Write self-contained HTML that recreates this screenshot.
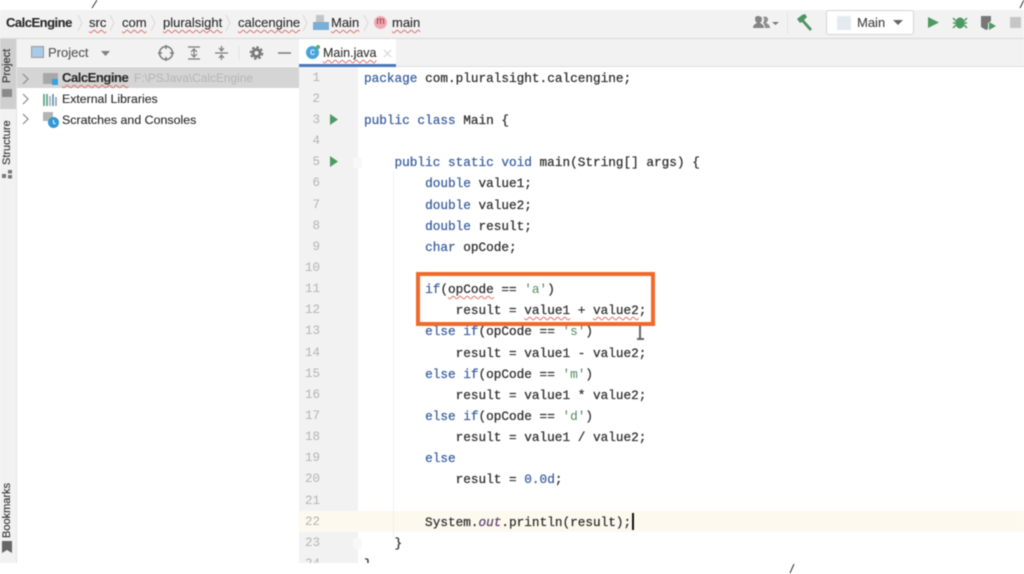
<!DOCTYPE html>
<html><head><meta charset="utf-8"><style>
html,body{margin:0;padding:0;background:#fff}
#r{position:relative;width:1024px;height:574px;overflow:hidden;background:#fff;font-family:"Liberation Sans",sans-serif;color:#2b2b2b;filter:blur(.45px)}
#r div,#r svg{position:absolute}
.t{white-space:pre;line-height:18px;font-size:13px;-webkit-text-stroke:.12px currentColor}
.u{text-decoration:underline wavy #e0706a 1px;text-underline-offset:2px;text-decoration-skip-ink:none}
.c{left:0;white-space:pre;font:12.72px/21px "Liberation Mono",monospace;color:#2e2e2e;-webkit-text-stroke:.25px #2e2e2e}
.k{color:#3a5f9e;-webkit-text-stroke:.25px #3a5f9e}.s{color:#4d8a5a;-webkit-text-stroke:0}.i{color:#7a4a93;font-style:italic}
.n{left:298px;width:22px;text-align:right;font:12.5px/21px "Liberation Mono",monospace;color:#b4b4b4}
.v{transform-origin:0 0;transform:rotate(-90deg);white-space:pre;font-size:11px;line-height:14px;color:#333;-webkit-text-stroke:.15px #333}
</style></head><body><div id="r">
<div style="left:0;top:10px;width:1024px;height:28px;background:#f2f2f2;border-bottom:1px solid #d8d8d8"></div>
<div style="left:0;top:39px;width:1024px;height:27px;background:#f2f2f2"></div>
<div style="left:0;top:39px;width:16px;height:524px;background:#f2f2f2;border-right:1px solid #e2e2e2"></div>
<div style="left:0;top:39px;width:16px;height:70px;background:#cfcfcf"></div>
<div style="left:17px;top:66px;width:282px;height:497px;background:#fff"></div>
<div style="left:17px;top:67px;width:282px;height:21px;background:#d5d5d5"></div>
<div style="left:299px;top:66px;width:725px;height:1px;background:#dcdcdc"></div>
<div style="left:299px;top:67px;width:59px;height:496px;background:#f2f2f2"></div>
<div style="left:299px;top:39px;width:97px;height:25px;background:#fff"></div>
<div style="left:299px;top:64px;width:97px;height:3px;background:#4a78b8"></div>
<div style="left:299px;top:511px;width:725px;height:21px;background:#fdf9ef"></div>
<div style="left:393px;top:172px;width:1px;height:365px;background:#efefef"></div>

<!-- breadcrumb -->
<div class="t" style="left:6px;top:14px;font-weight:bold;letter-spacing:-.5px">CalcEngine</div>
<div class="t u" style="left:89px;top:14px">src</div>
<div class="t u" style="left:122px;top:14px">com</div>
<div class="t u" style="left:163px;top:14px">pluralsight</div>
<div class="t u" style="left:238px;top:14px">calcengine</div>
<div class="t u" style="left:331px;top:14px">Main</div>
<div class="t u" style="left:392px;top:14px">main</div>
<svg style="left:0;top:12px" width="400" height="24" fill="none" stroke="#d8d8d8" stroke-width="1"><path d="M78 3l4 8-4 8M110 3l4 8-4 8M151 3l4 8-4 8M226 3l4 8-4 8M303 3l4 8-4 8M364 3l4 8-4 8"/></svg>
<div style="left:313px;top:22px;width:16px;height:8px;background:#79aed6"></div>
<div style="left:316px;top:15px;width:8px;height:7px;background:#c4c4c4"></div>
<div style="left:374px;top:16px;width:13px;height:13px;border-radius:50%;background:#eeaab0;color:#a03040;font-size:10px;line-height:11px;text-align:center">m</div>

<!-- right toolbar -->
<svg style="left:750px;top:10px" width="274" height="30">
<path d="M3 18c0-3 2-4 4-5-1-1-2-2-2-4s1-3 3-3 4 1 4 3-1 3-2 4c2 1 4 2 4 5z" fill="#858585"/><path d="M13 7c2-1 5 0 5 2s-1 3-2 4c2 1 4 2 4 5h-5c0-2-1-4-2-5 1-2 2-4 0-6z" fill="#8f8f8f"/><path d="M22 12h7l-3.500 3z" fill="#777"/>
<path d="M47 9l5-4 3-1 2 3-3 3 8 9-2 2-8-9-2 1z" fill="#4f9464"/>
<path d="M178 7l11 5.500-11 5.500z" fill="#4c9a62"/>
<ellipse cx="210" cy="13" rx="4.500" ry="5.500" fill="#4c9a62"/><path d="M203 8l3 3M217 8l-3 3M203 13h4M217 13h-4M203 18l3-3M217 18l-3-3" stroke="#4c9a62" stroke-width="1.500"/>
<path d="M231 6h10v5l-3 2v6l-2 1-5-3z" fill="#777"/><path d="M239 12l7 4-7 4z" fill="#4c9a62"/>
<rect x="260" y="7" width="11" height="11" fill="#c6c6c6"/>
</svg>
<div style="left:826px;top:10px;width:86px;height:23px;background:#fff;border:1px solid #d4d4d4;border-radius:3px"></div>
<div style="left:837px;top:16px;width:14px;height:14px;background:#e4ebf0"></div>
<div class="t" style="left:857px;top:14px;color:#444">Main</div>
<svg style="left:893px;top:20px" width="11" height="7"><path d="M0 0h10l-5 5z" fill="#666"/></svg>
<div style="left:787px;top:13px;width:1px;height:21px;background:#e2e2e2"></div>

<!-- project header -->
<div style="left:31px;top:46px;width:13px;height:12px;background:#a9cbe6;border:1px solid #9a9a9a;box-sizing:border-box"></div>
<div class="t" style="left:48px;top:44px;color:#555">Project</div>
<svg style="left:100px;top:40px" width="200" height="26" fill="none" stroke="#7a7a7a" stroke-width="1.500">
<path d="M1 11h9l-4.500 5z" fill="#808080" stroke="none"/>
<circle cx="66" cy="13" r="6.500"/><path d="M66 5v4M66 17v4M58 13h4M70 13h4"/>
<path d="M88 7h12M88 19h12M94 10v6M91 12l3-3 3 3M91 14l3 3 3-3" stroke-width="1.200"/>
<path d="M115 13h13M121.500 6v4M121.500 20v-4M119 8l2.500 3 2.500-3M119 18l2.500-3 2.500 3" stroke-width="1.200"/>
<circle cx="156.500" cy="13" r="3.500" stroke-width="3"/><circle cx="156.500" cy="13" r="5.800" stroke-width="2" stroke-dasharray="2.500 2"/>
<path d="M178 13h13"/><path d="M139 6v14" stroke="#e2e2e2" stroke-width="1"/></svg>

<!-- tree -->
<svg style="left:20px;top:69px" width="14" height="62" fill="none" stroke="#8a8a8a" stroke-width="1.200"><path d="M3 5l5 5-5 5M3 25l5 5-5 5M3 45l5 5-5 5"/></svg>
<div style="left:43px;top:73px;width:15px;height:11px;background:#a8a8a8"></div><div style="left:52px;top:79px;width:6px;height:6px;background:#3ba0dc"></div>
<svg style="left:43px;top:94px" width="16" height="12"><path d="M1 0v12M4 0v12" stroke="#4f9f7a" stroke-width="1.600"/><path d="M7 2v10" stroke="#aaa" stroke-width="1.600"/><path d="M10 0v12" stroke="#4a90c8" stroke-width="1.600"/><path d="M13 3v9" stroke="#999" stroke-width="1.600"/></svg>
<svg style="left:42px;top:111px" width="18" height="18"><rect x="1" y="1" width="10" height="9" fill="#b4b4b4"/><circle cx="11.500" cy="11.500" r="5.500" fill="#3398d4"/><path d="M11.500 9v3l2 1" stroke="#fff" fill="none"/></svg>
<div class="t u" style="left:62px;top:69px;font-weight:bold;letter-spacing:-.45px">CalcEngine</div>
<div class="t" style="left:134px;top:69px;font-size:11.900px;color:#b5b5b5;-webkit-text-stroke:0">F:\PSJava\CalcEngine</div>
<div class="t" style="left:62px;top:90px;font-size:12.300px">External Libraries</div>
<div class="t" style="left:62px;top:111px;font-size:12.400px">Scratches and Consoles</div>

<!-- tab -->
<div style="left:306px;top:46px;width:13px;height:13px;border-radius:50%;background:#4aa3d8;color:#fff;font-size:10px;line-height:13px;text-align:center">c</div>
<div style="left:316px;top:45px;width:4px;height:4px;background:#58a868;border-radius:50%"></div>
<div class="t u" style="left:323px;top:44px;color:#333;font-size:12.500px">Main.java</div>
<svg style="left:383px;top:49px" width="10" height="10"><path d="M1 1l7 7M8 1l-7 7" stroke="#d2d2d2"/></svg>

<!-- sidebar vertical -->
<div class="v" style="left:0;top:83px">Project</div>
<div style="left:2px;top:89px;width:10px;height:8px;background:#8a8a8a"></div>
<div class="v" style="left:0;top:165px">Structure</div>
<svg style="left:1px;top:169px" width="12" height="11"><path d="M1 5h4v4H1zM7 1h4v3.500H7zM7 6h4v3.500H7z" fill="#777"/></svg>
<div class="v" style="left:0;top:538px">Bookmarks</div>
<svg style="left:2px;top:541px" width="10" height="12"><path d="M0 0h10v12L5 9 0 12z" fill="#666"/></svg>

<!-- line numbers -->
<div class="n" style="top:68px">1</div><div class="n" style="top:89px">2</div><div class="n" style="top:110px">3</div><div class="n" style="top:131px">4</div><div class="n" style="top:152px">5</div><div class="n" style="top:173px">6</div><div class="n" style="top:195px">7</div><div class="n" style="top:216px">8</div><div class="n" style="top:237px">9</div><div class="n" style="top:258px">10</div><div class="n" style="top:279px">11</div><div class="n" style="top:300px">12</div><div class="n" style="top:321px">13</div><div class="n" style="top:343px">14</div><div class="n" style="top:364px">15</div><div class="n" style="top:385px">16</div><div class="n" style="top:406px">17</div><div class="n" style="top:427px">18</div><div class="n" style="top:448px">19</div><div class="n" style="top:469px">20</div><div class="n" style="top:491px">21</div><div class="n" style="top:512px">22</div><div class="n" style="top:533px">23</div><div class="n" style="top:554px">24</div>
<svg style="left:330px;top:114px" width="10" height="54"><path d="M0 0l8 5.500-8 5.500zM0 42l8 5.500-8 5.500z" fill="#4f9a63"/></svg>
<div style="left:353px;top:157px;width:9px;height:11px;background:#f8f8f8;border-radius:3px"></div>
<div style="left:353px;top:538px;width:9px;height:11px;background:#f8f8f8;border-radius:3px"></div>

<!-- code -->
<div style="left:364px;top:1px;width:660px;height:562px;overflow:hidden">
<div class="c" style="top:67px"><span class="k">package</span> com.pluralsight.calcengine;</div>
<div class="c" style="top:109px"><span class="k">public class</span> Main {</div>
<div class="c" style="top:151px">    <span class="k">public static void</span> main(String[] args) {</div>
<div class="c" style="top:172px">        <span class="k">double</span> value1;</div>
<div class="c" style="top:194px">        <span class="k">double</span> value2;</div>
<div class="c" style="top:215px">        <span class="k">double</span> result;</div>
<div class="c" style="top:236px">        <span class="k">char</span> opCode;</div>
<div class="c" style="top:278px">        <span class="k">if</span>(<span class="u">opCode</span> == <span class="s">'a'</span>)</div>
<div class="c" style="top:299px">            result = <span class="u">value1</span> + <span class="u">value2</span>;</div>
<div class="c" style="top:320px">        <span class="k">else if</span>(opCode == <span class="s">'s'</span>)</div>
<div class="c" style="top:342px">            result = value1 - value2;</div>
<div class="c" style="top:363px">        <span class="k">else if</span>(opCode == <span class="s">'m'</span>)</div>
<div class="c" style="top:384px">            result = value1 * value2;</div>
<div class="c" style="top:405px">        <span class="k">else if</span>(opCode == <span class="s">'d'</span>)</div>
<div class="c" style="top:426px">            result = value1 / value2;</div>
<div class="c" style="top:447px">        <span class="k">else</span></div>
<div class="c" style="top:468px">            result = <span class="k">0.0d</span>;</div>
<div class="c" style="top:511px">        System.<span class="i">out</span>.println(result);</div>
<div class="c" style="top:532px">    }</div>
<div class="c" style="top:553px">}</div>
</div>
<div style="left:632px;top:513px;width:2px;height:17px;background:#111"></div>
<div style="left:416px;top:272px;width:239px;height:54px;box-sizing:border-box;border:4px solid #ee6a2a"></div>
<svg style="left:635px;top:325px" width="12" height="16"><path d="M5 1v12M2 14h7" stroke="#666" stroke-width="2"/></svg>

<!-- bottom mask and marks -->
<div style="left:0;top:563px;width:1024px;height:11px;background:#fff"></div>
<svg style="left:0;top:0" width="1024" height="574" fill="none" stroke="#333"><path d="M97 0l-5 8M1024 0l-4 8M794 564l-4 9"/></svg>
</div></body></html>
